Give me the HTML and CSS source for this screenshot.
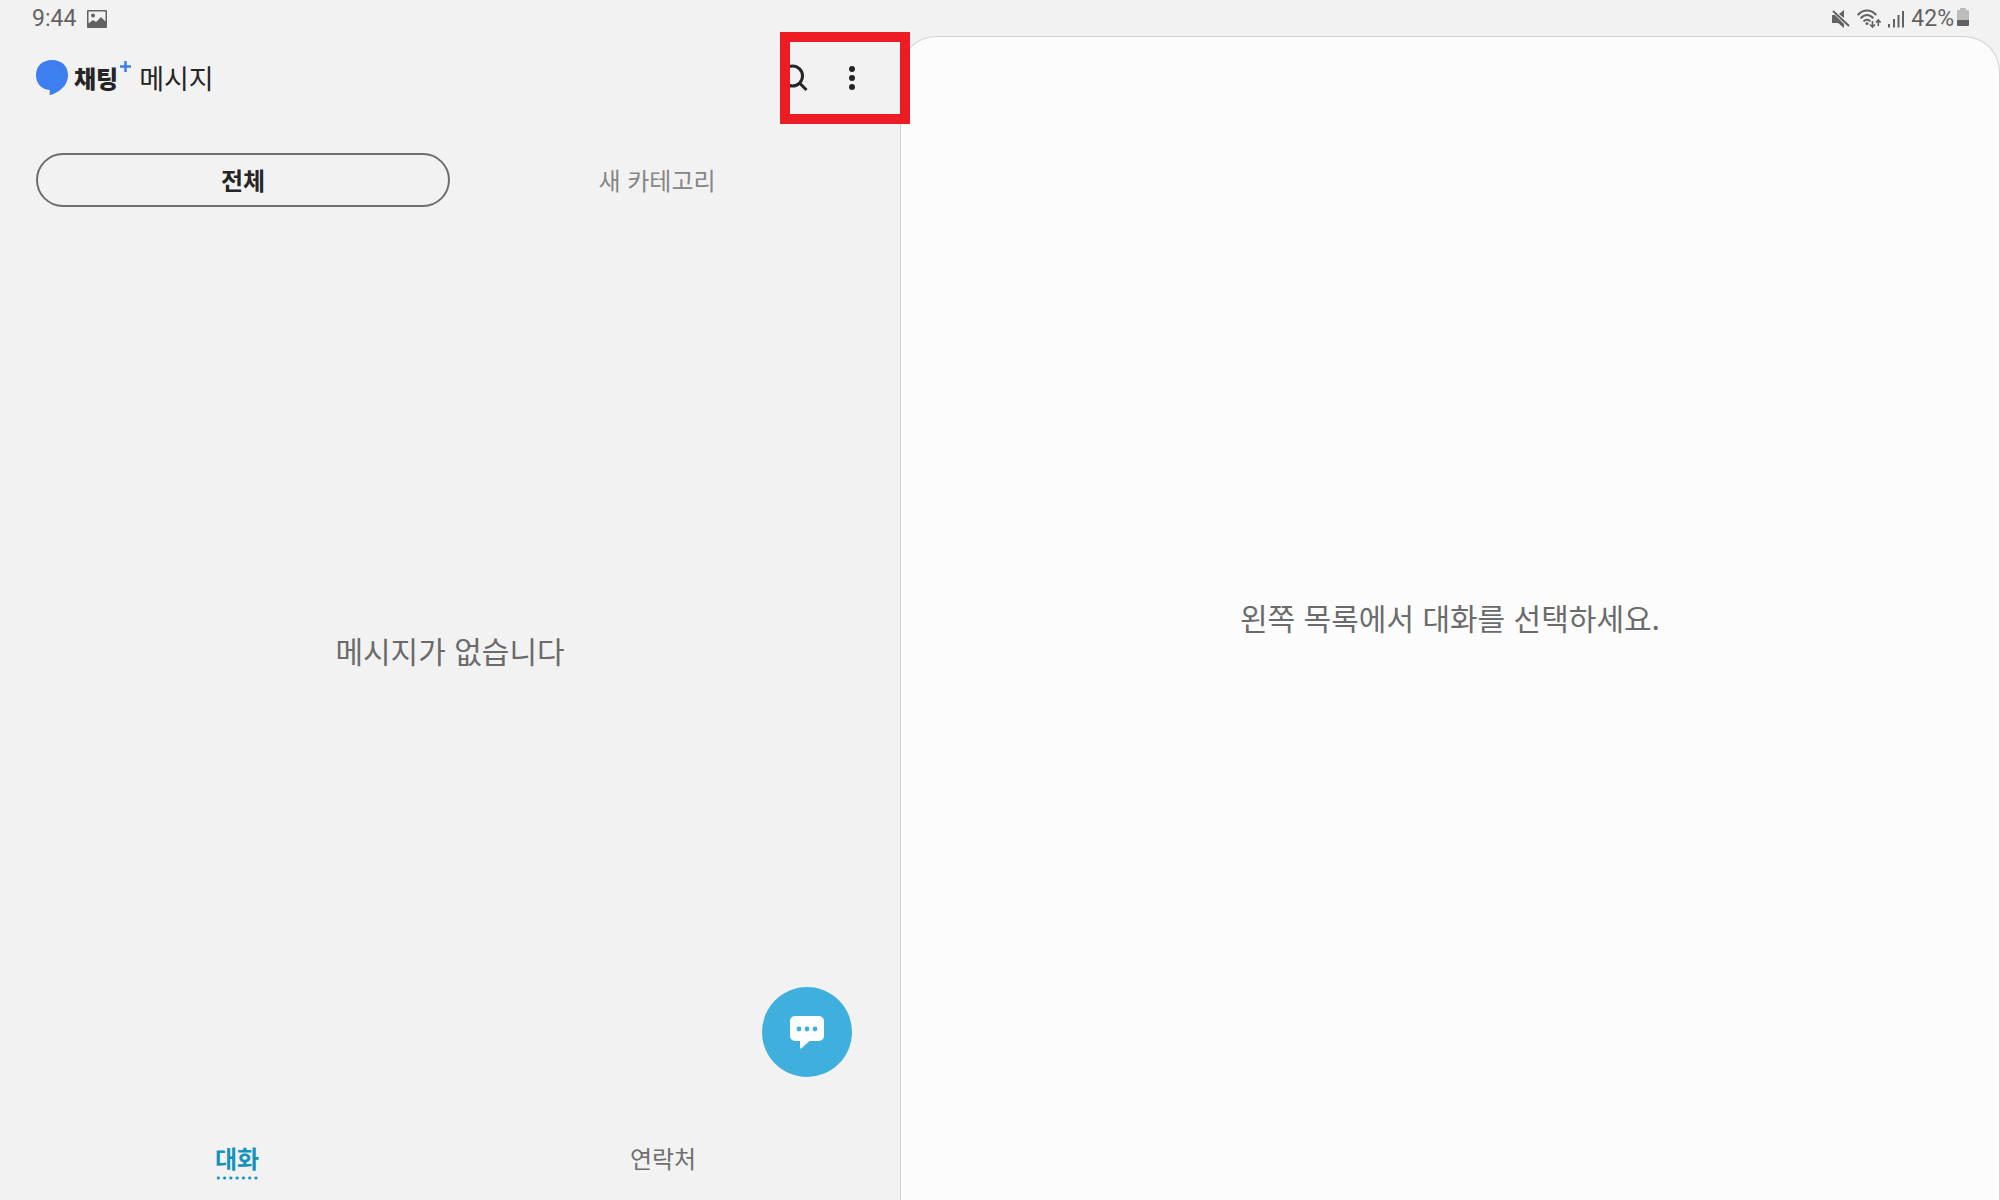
FILE: index.html
```html
<!DOCTYPE html>
<html lang="ko">
<head>
    <meta charset="UTF-8">
    <meta name="viewport" content="width=device-width, initial-scale=1.0">
    <title>채팅+ 메시지</title>
    <link rel="stylesheet" href="styles.css">
</head>
<body>
    <div class="status-bar">
        <div class="status-group">
            <span>9:44</span>
            <svg class="icon-picture" width="20" height="18" viewBox="0 0 20 18">
                <path fill="currentColor" fill-rule="evenodd" d="M1 0h18a1 1 0 0 1 1 1v16a1 1 0 0 1-1 1H1a1 1 0 0 1-1-1V1a1 1 0 0 1 1-1zM1.500 1.500v12l4.500-3.500 3 2 5-5 4.500 4.500v-10zM6 3.500a2 2 0 1 1 0 4 2 2 0 0 1 0-4z"/>
            </svg>
        </div>
        <div class="status-group">
            <svg width="18" height="18" viewBox="0 0 18 18">
                <path fill="currentColor" d="M0 5h3l9 9v4l-6-5H0zM7 4l5-4v8z"/>
                <path stroke="currentColor" stroke-width="2" d="M1 1l16 15"/>
            </svg>
            <svg class="icon-wifi" width="24" height="20" viewBox="0 0 24 20" fill="none" stroke="currentColor">
                <path stroke-width="2" d="M.7 6C6-.1 14-.1 19.300 6M3.600 9.300c4-4.400 8.800-4.400 12.800 0M6.500 12.500c2-2.500 5-2.500 7 0"/>
                <circle cx="10" cy="14.500" r="1.500" fill="currentColor" stroke="none"/>
                <path stroke-width="1.600" d="M15.500 12v6M13 15.500l2.500 2.500 2.500-2.500M21.300 17v-6M19 13.500l2.300-2.500 2.300 2.500"/>
            </svg>
            <svg class="icon-signal" width="16" height="18" viewBox="0 0 16 18">
                <path fill="currentColor" d="M0 14h2v3.500H0zM5 9h2v8.500H5zM9.500 5h2v12.500h-2zM14 1h2v16.500h-2z"/>
            </svg>
            <span class="battery-text">42%</span>
            <svg class="icon-battery" width="12" height="18" viewBox="0 0 12 18">
                <path fill="#bcbcbc" d="M3 0h6v2h2a1 1 0 0 1 1 1v9H0V3a1 1 0 0 1 1-1h2z"/>
                <path fill="currentColor" d="M0 12h12v5a1 1 0 0 1-1 1H1a1 1 0 0 1-1-1z"/>
            </svg>
        </div>
    </div>

    <div class="panes">
        <div class="list-pane">
            <header class="app-header">
                <h1 class="title">
                    <svg class="logo" width="32" height="36" viewBox="0 0 32 36">
                        <path fill="#3d7ef0" d="M16 0C6 0 0 6.500 0 15c0 8.500 5 14 13.700 15v5.300C24 32 32 25.500 32 15 32 6.500 26 0 16 0z"/>
                    </svg>
                    <span class="brand">채팅</span>
                    <svg class="plus" width="11" height="11" viewBox="0 0 11 11">
                        <path stroke="#3d7ef0" stroke-width="2.500" d="M5.500 0v11M0 5.500h11"/>
                    </svg>
                    <span>메시지</span>
                </h1>
                <div class="actions">
                    <button class="icon-btn" type="button" aria-label="검색">
                        <svg width="28" height="28" viewBox="0 0 28 28" fill="none" stroke="currentColor" stroke-width="3">
                            <circle cx="12.500" cy="12" r="10"/>
                            <path d="M19.500 19l7 7"/>
                        </svg>
                    </button>
                    <button class="icon-btn" type="button" aria-label="더보기">
                        <svg width="28" height="28" viewBox="0 0 28 28" fill="currentColor">
                            <circle cx="14" cy="5" r="3"/>
                            <circle cx="14" cy="14" r="3"/>
                            <circle cx="14" cy="23" r="3"/>
                        </svg>
                    </button>
                </div>
                <div class="highlight"></div>
            </header>

            <div class="categories">
                <button class="category active" type="button">전체</button>
                <button class="category" type="button">새 카테고리</button>
            </div>

            <p class="empty">메시지가 없습니다</p>

            <button class="compose" type="button" aria-label="새 대화">
                <svg width="34" height="34" viewBox="0 0 34 34">
                    <path fill="#fff" d="M5 1h24a5 5 0 0 1 5 5v15a5 5 0 0 1-5 5H19.500L11.500 33.300q-1.500 1-1.500-1V26H5a5 5 0 0 1-5-5V6a5 5 0 0 1 5-5z"/>
                    <g fill="#3fb0dd">
                        <circle cx="9" cy="14" r="2.400"/>
                        <circle cx="17" cy="14" r="2.400"/>
                        <circle cx="25" cy="14" r="2.400"/>
                    </g>
                </svg>
            </button>

            <nav class="bottom-nav">
                <a class="nav-link active" href="#chats"><span>대화</span></a>
                <a class="nav-link" href="#contacts"><span>연락처</span></a>
            </nav>
        </div>

        <main class="detail-pane">
            <p>왼쪽 목록에서 대화를 선택하세요.</p>
        </main>
    </div>
</body>
</html>
```

FILE: styles.css
```css
* {
    box-sizing: border-box;
}

body {
    margin: 0;
    min-height: 100vh;
    display: flex;
    flex-direction: column;
    background: #f2f2f2;
    color: #252525;
    font-family: Roboto, 'Noto Sans CJK KR', sans-serif;
}

button {
    padding: 0;
    border: none;
    background: none;
    color: inherit;
    font-family: inherit;
    cursor: pointer;
}

svg {
    display: block;
}

p {
    margin: 0;
}

.status-bar {
    display: flex;
    justify-content: space-between;
    align-items: center;
    height: 36px;
    padding: 2px 31px 0 32px;
    color: #626262;
    font-size: 23px;
    line-height: 34px;
}

.status-group {
    display: flex;
    align-items: center;
}

.icon-picture {
    margin-left: 11px;
}

.icon-wifi {
    margin-left: 7px;
}

.icon-signal {
    margin-left: 7px;
}

.battery-text {
    margin: 0 3px 0 7px;
}

.icon-battery {
    margin-bottom: 4px;
}

.panes {
    flex: 1;
    display: flex;
}

.list-pane {
    position: relative;
    width: 45%;
    display: flex;
    flex-direction: column;
    font-family: 'Noto Sans CJK KR', sans-serif;
}

.app-header {
    position: relative;
    display: flex;
    justify-content: space-between;
    align-items: center;
    height: 84px;
    padding: 0 34px 0 36px;
}

.title {
    display: flex;
    align-items: center;
    margin: 0;
    font-size: 27px;
    font-weight: 400;
    line-height: 36px;
}

.brand {
    margin-left: 6px;
    font-size: 24px;
    font-weight: 900;
}

.plus {
    align-self: flex-start;
    margin: 1px 8px 0 2px;
}

.actions {
    display: flex;
    gap: 30px;
}

/* red frame around the menu button */
.highlight {
    position: absolute;
    top: -4px;
    right: -10px;
    z-index: 1;
    width: 130px;
    height: 92px;
    border: 10px solid #ed1c24;
    pointer-events: none;
}

.categories {
    display: flex;
    margin-top: 33px;
    padding: 0 36px;
}

.category {
    flex: 1;
    height: 54px;
    padding-bottom: 2px;
    border: 2px solid transparent;
    border-radius: 27px;
    color: #868686;
    font-size: 24px;
}

.category.active {
    border-color: #6e6e6e;
    color: #252525;
    font-weight: 700;
}

.empty {
    flex: 1;
    display: flex;
    align-items: center;
    justify-content: center;
    padding-bottom: 6px;
    color: #6b6b6b;
    font-size: 30px;
}

.compose {
    position: absolute;
    right: 48px;
    bottom: 123px;
    display: flex;
    align-items: center;
    justify-content: center;
    width: 90px;
    height: 90px;
    border-radius: 50%;
    background: #3fb0dd;
}

.bottom-nav {
    display: flex;
    height: 102px;
    padding: 42px 24px 0;
}

.nav-link {
    flex: 1;
    color: #6e6e6e;
    font-size: 24px;
    line-height: 36px;
    text-align: center;
    text-decoration: none;
}

.nav-link span {
    display: inline-block;
    padding-bottom: 4px;
}

.nav-link.active {
    color: #1592bb;
    font-weight: 700;
}

/* dotted underline, dots spread evenly over the label */
.nav-link.active span {
    background: radial-gradient(circle, #1592bb 1px, transparent 2px) bottom / 6px 4px round no-repeat;
    background-repeat: round no-repeat;
}

.detail-pane {
    flex: 1;
    display: flex;
    align-items: center;
    justify-content: center;
    padding-bottom: 4px;
    border: 1px solid #d2d2d2;
    border-bottom: none;
    border-radius: 36px 36px 0 0;
    background: #fcfcfc;
    color: #6b6b6b;
    font-family: 'Noto Sans CJK KR', sans-serif;
    font-size: 30px;
}
```
